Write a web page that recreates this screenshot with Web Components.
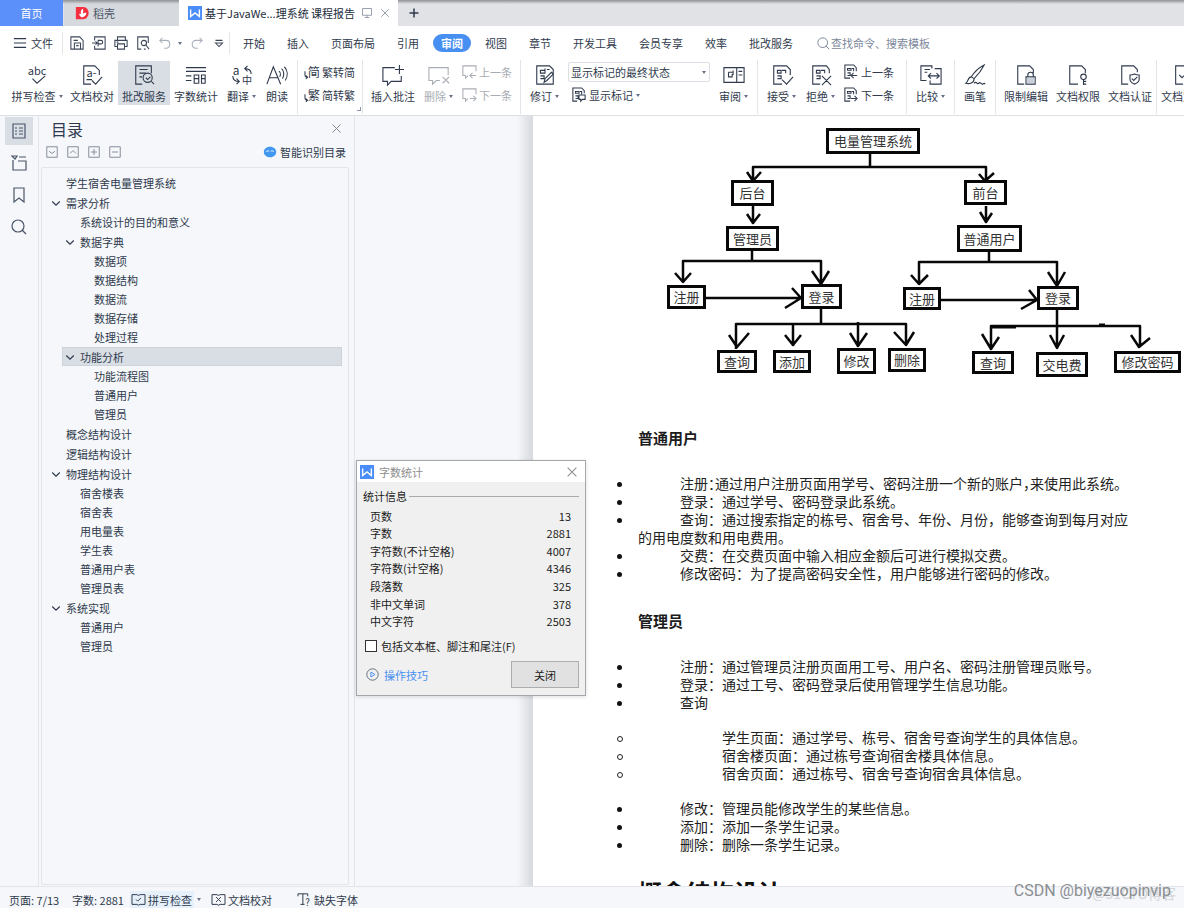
<!DOCTYPE html>
<html lang="zh-CN">
<head>
<meta charset="utf-8">
<title>基于JavaWeb的学生宿舍电量管理系统 课程报告</title>
<style>
html,body{margin:0;height:100%}
body{font-family:"Noto Sans CJK SC","Noto Sans",sans-serif;font-size:11px;line-height:16px;color:#2f3a4d;--line:#e2e5ea;--pane:#f5f7fa;--pick:#d9dee5;--accent:#478ff0;overflow:hidden}
</style>
</head>
<body>
<writer-app></writer-app>
<script>
const ICONS = {
  spell:['<text x="12" y="12" text-anchor="middle" font-size="12" fill="currentColor" stroke="none">abc</text><path d="M7 16l5 5 9-8"/>'],
  proof:['<path d="M11 22H3V2h12l5 5v5M12 18l4 4 7-8M6 17h6"/><text x="6" y="14" font-size="12" fill="currentColor" stroke="none">a-</text>'],
  batch:['<path d="M10 22H3V2h17v8M7 6h9M7 10h7M7 14h3"/><circle cx="16" cy="15" r="5"/><path d="M20 19l3 3M14 15l2 2 3-3"/>'],
  count:['<path d="M1 4h22M1 8h22M1 13h6M1 18h6M10 12h5v9h-5zM10 16h5M18 12h4v9h-4zM18 16h4"/>'],
  translate:['<text x="2" y="12" font-size="13" fill="currentColor" stroke="none">a</text><text x="12" y="22" font-size="11" fill="currentColor" stroke="none">中</text><path d="M22 11c0-4-2-6-7-6M18 2l-3 3 3 3M2 13c0 4 2 6 7 6M6 16l3 3-3 3"/>'],
  read:['<path d="M1 22L8 3l8 19M4 15h9M14 8c2 1 2 4 1 6M17 5c3 2 3 8 1 11M20 3c4 4 4 10 1 15"/>'],
  addnote:['<path d="M14 4H1v15h5v4l4-4h11v-6M19 1v10M14 6h10"/>'],
  delnote:['<path d="M22 12V4H1v14h4v4l4-4h4M16 14l7 7M23 14l-7 7"/>'],
  revise:['<path d="M12 22H3V2h14l4 4v16h-4M7 7h5v3H7zM12 7V5M14 6h3M7 13h4v3H7M11 20l1-4 7-7 2 2-7 7zM12 22h6"/>'],
  review:['<path d="M1 4h22v16H1zM15 4v16M17 8h4M17 12h4M6 9h5M6 9v5h4v-3M11 7v5"/>'],
  accept:['<path d="M12 22H3V2h14l4 4v6M7 7h4v3H7zM12 7h4v3M7 13h4v3H7M12 17l5 5 7-8"/>'],
  reject:['<path d="M11 22H3V2h15l3 4v4M7 7h4v3H7zM12 7h4v3M7 13h4v3H7M13 13l10 10M23 13L13 23"/>'],
  compare:['<path d="M7 18H1V2h12v3M16 5h7v17H11v-4M5 6h6M5 9h3M9 13h12M12 10l-3 3 3 3M18 10l3 3-3 3"/>'],
  brush:['<path d="M22 1C16 4 11 9 8 14l3 2c4-4 8-9 11-15zM8 14c-4 0-3 5-6 7 4 1 9 0 9-5M11 21c3-3 3 2 5 0s3 1 4 1 2-2 3 0"/>'],
  lock:['<path d="M10 22H3V2h13l4 4v4M12 14h10v8H12zM14 14v-2c0-4 6-4 6 0v2"/><path d="M13 15h8v6h-8z" fill="#c9d0da" stroke="none"/>'],
  key:['<path d="M12 22H3V2h13l4 4v4M18 17v6M18 19h3M18 22h3"/><circle cx="18" cy="14" r="3"/>'],
  cert:['<path d="M10 22H3V2h13l4 4v3M17 11c2 1 3 1 5 1v5c0 3-3 4-5 5-2-1-5-2-5-5v-5c2 0 3 0 5-1zM14 16l2 2 4-4"/>'],
  draft:['<path d="M12 22H4V2h13l4 4v16M8 12l3 3 6-6"/>'],
  jian:['<text x="3" y="14" font-size="14" fill="currentColor" stroke="none">简</text><path d="M0 7v4c0 2 0 3 3 3M1 12l2 2-2 2"/>'],
  fan:['<text x="3" y="14" font-size="14" fill="currentColor" stroke="none">繁</text><path d="M0 7v4c0 2 0 3 3 3M1 12l2 2-2 2"/>'],
  prevnote:['<path d="M16 7V1H1v11h3v3l3-3M16 12H9M12 9l-3 3 3 3"/>'],
  nextnote:['<path d="M16 7V1H1v11h3v3l3-3M9 12h7M13 9l3 3-3 3"/>'],
  marks:['<path d="M6 15H1V0h10l3 3v3M4 4h4v2H4zM9 4h2v3M4 9h3v3H4M8 8h7v5h-3l-2 2v-2H8z"/>'],
  prevmark:['<path d="M7 15H1V0h10l3 3v4M4 4h4v2H4zM9 4h2v3M4 9h3v3H4M15 12H9M11 9l-3 3 3 3"/>'],
  nextmark:['<path d="M7 15H1V0h10l3 3v4M4 4h4v2H4zM9 4h2v3M4 9h3v3H4M8 12h6M12 9l3 3-3 3"/>'],
  menu:['<path d="M1 3h14M1 8h14M1 13h14"/>'],
  save:['<path d="M1 1h10l4 4v10H1zM5 15V8h7v7M4 5h5M7 11h3"/>'],
  output:['<path d="M3 5V1h12v14H3v-4M0 8h6M4 6l2 2-2 2M7 12V5h3c3 0 3 4 0 4H7"/>'],
  print:['<path d="M4 5V1h9v4M4 12H1V5h14v7h-3M4 9h8v6H4zM3 7h2"/>'],
  preview:['<path d="M6 15H2V1h12v7"/><circle cx="9" cy="8" r="3"/><path d="M11 10l4 5M9 15h2"/>'],
  undo:['<path d="M5 2L2 5l3 3M2 5h7c6 0 6 9 0 9H7"/>'],
  redo:['<path d="M11 2l3 3-3 3M14 5H7c-6 0-6 9 0 9h2"/>'],
  more:['<path d="M4 5h8M4 8l4 4 4-4z"/>'],
  search:['<circle cx="7" cy="7" r="6"/><path d="M11 11l4 4"/>'],
  close:['<path d="M3 3l10 10M13 3L3 13"/>'],
  plus:['<path d="M8 2v12M2 8h12" stroke-width="2"/>'],
  screen:['<path d="M2 2h12v9H2zM5 14h6M8 11v3"/>'],
  wps:['<path d="M0 0h16v16H0z" fill="#4b8df8" stroke="none"/><path d="M3 4v8l5-4 5 4V4" stroke="#fff" stroke-width="1.6"/>'],
  docer:['<path d="M1 1h9c8 1 7 14-1 14H1z" fill="#f5303f" stroke="none"/><path d="M8 13C4 11 4 8 7 9c-1-3 0-5 2-6 1 2 0 4 0 6 2-2 3-1 4-1 0 3-2 4-5 5z" fill="#fff" stroke="none"/>'],
  toc:['<path d="M2 1h12v14H2zM4 5h2M4 8h2M4 11h2M8 5h4M8 8h4M8 11h4"/>'],
  folder:['<path d="M2 5v10h13V6H7M1 1h5L4 4zM8 2h7"/>'],
  bookmark:['<path d="M3 1h10v14l-5-4-5 4z"/>'],
  down:['<path d="M3 6l5 5 5-5" stroke-width="1.6"/>'],
  boxdown:['<path d="M1 1h14v14H1z"/><path d="M4 7l4 3 4-3"/>'],
  boxup:['<path d="M1 1h14v14H1z"/><path d="M4 10l4-4 4 4"/>'],
  boxplus:['<path d="M1 1h14v14H1z"/><path d="M4 8h8M8 4v8"/>'],
  boxminus:['<path d="M1 1h14v14H1z"/><path d="M4 8h8"/>'],
  smart:['<path d="M8 1c11 0 11 14 0 14S-3 1 8 1z" fill="#4298f0" stroke="none"/><path d="M3 8c1-2 3-2 4-1M9 7c2-1 3-1 4 1" stroke="#fff"/>'],
  play:['<circle cx="8" cy="8" r="7" stroke="#66707f"/><path d="M6 5l5 3-5 3z"/>'],
  bookcheck:['<path d="M0 2h6l2 1 2-1h6v12h-6l-2 1-2-1H0zM5 8l2 2 4-4"/>'],
  bookx:['<path d="M0 2h6l2 1 2-1h6v12h-6l-2 1-2-1H0zM5 5l6 6M11 5l-6 6"/>'],
  missing:['<path d="M0 4V1h12v3M6 1v13M3 14h5"/><text x="9" y="16" font-size="12" fill="currentColor" stroke="none">?</text>'],
};
const BIG = new Set(['spell','proof','batch','count','translate','read','addnote','delnote','revise','review','accept','reject','compare','brush','lock','key','cert','draft']);

const RESET = `*{box-sizing:border-box}
button{font:inherit;color:inherit;background:none;border:0;padding:0;margin:0;cursor:default;white-space:nowrap}
h1,h2,h3,p,ul{margin:0;padding:0}a{color:inherit;text-decoration:none}`;

function component(name, css, html, setup) {
  customElements.define(name, class extends HTMLElement {
    connectedCallback() {
      if (this.shadowRoot) return;
      const root = this.attachShadow({mode: 'open'});
      const t = document.createElement('template');
      t.innerHTML = `<style>${RESET}${css}</style>${typeof html === 'function' ? html(this) : html}`;
      root.append(t.content.cloneNode(true));
      if (setup) setup(root, this);
    }
  });
}

component('ui-icon', `:host{display:inline-flex;flex:none;width:var(--icon,16px);height:var(--icon,16px)}
svg{width:100%;height:100%;fill:none;stroke:currentColor;stroke-width:1.2;overflow:visible}`,
  el => { const n = el.getAttribute('name'), s = BIG.has(n) ? 24 : 16;
    return `<svg viewBox="0 0 ${s} ${s}" aria-hidden="true">${ICONS[n][0]}</svg>`; });

component('ui-caret', `:host{display:inline-block;flex:none;width:0;height:0;border:2px solid transparent;border-top:3px solid #66728a;border-bottom:0}`, '');

/* Large ribbon command: icon over label */
component('tool-button', `:host{display:flex;flex:none;width:52px;height:44px}
:host([size=m]){width:39px}:host([size=s]){width:32px}:host([size=l]){width:58px}
:host([active]){background:var(--pick)}:host([off]){color:#a9adb4}
button{width:100%;display:flex;flex-direction:column;align-items:center;justify-content:space-between;padding:3px 0 1px}
ui-icon{--icon:22px}span{display:flex;align-items:center;gap:3px}`,
  el => `<button type="button"><ui-icon name="${el.getAttribute('icon')}"></ui-icon><span><slot></slot>${el.hasAttribute('menu') ? '<ui-caret></ui-caret>' : ''}</span></button>`);

/* Small ribbon command: icon beside label */
component('tool-line', `:host{display:flex;flex:none}:host([off]){color:#a9adb4}
button{display:flex;align-items:center;gap:3px;height:16px}ui-icon{--icon:14px}`,
  el => `<button type="button"><ui-icon name="${el.getAttribute('icon')}"></ui-icon><slot></slot>${el.hasAttribute('menu') ? '<ui-caret></ui-caret>' : ''}</button>`);

component('tool-stack', `:host{display:flex;flex:none;flex-direction:column;gap:7px;padding-top:3px}`, '<slot></slot>');

component('ribbon-group', `:host{display:flex;flex:none;height:54px;padding:1px 4px 0;border-right:1px solid var(--line)}
:host([wide]){padding-left:7px;padding-right:7px}:host([lead]){padding-left:8px}
:host([flush]){padding-right:0}:host(:last-child){border:0;padding-left:0}`, '<slot></slot>');

component('tab-bar', `:host{display:flex;height:26px;background:linear-gradient(#8f9194,#e0e2e6 4px);flex:none}
button{display:flex;align-items:center;height:26px}
.home{width:63px;justify-content:center;background:#5b8ff9;color:#fff}
.tab{width:115px;padding-left:11px;gap:4px;background:linear-gradient(#8f9194,#d6d9de 4px);margin-left:1px;color:#4b5566}
.now{width:219px;padding:0 9px;gap:3px;background:#fff;color:#222c3c}
ui-icon{--icon:14px}.now span{flex:1;text-align:left}.dim{--icon:12px;color:#8d96a8;margin-left:3px}
.add{width:31px;justify-content:center}.add ui-icon{--icon:12px}`,
`<button type="button" class="home">首页</button>
<button type="button" class="tab"><ui-icon name="docer"></ui-icon>稻壳</button>
<button type="button" class="now"><ui-icon name="wps"></ui-icon><span>基于JavaWe...理系统 课程报告</span><ui-icon class="dim" name="screen"></ui-icon><ui-icon class="dim" name="close"></ui-icon></button>
<button type="button" class="add" aria-label="新建标签"><ui-icon name="plus"></ui-icon></button>`);

component('menu-strip', `:host{display:flex;align-items:center;height:34px;background:#fff;flex:none;padding-left:13px}
.file{display:flex;align-items:center;gap:4px;padding-right:9px;height:22px;border-right:1px solid var(--line)}
.quick{display:flex;align-items:center;gap:8px;padding:0 3px 0 7px;height:22px;border-right:1px solid var(--line);color:#3c4659}
.quick button{display:flex}.quick ui-icon{--icon:14px}.file ui-icon{--icon:14px}.fade{color:#a9b0bb}
.pair{display:flex;align-items:center;gap:6px}
nav{display:flex;gap:22px;padding-left:13px}nav button{line-height:18px}
nav .on{background:var(--accent);color:#fff;font-weight:700;border-radius:9px;padding:0 8px;margin:0 -8px}
label{display:flex;align-items:center;gap:1px;margin-left:24px;color:#7c879b}label ui-icon{--icon:13px}
input{font:inherit;border:0;outline:0;padding:0;width:120px;background:none}input::placeholder{color:#7c879b;opacity:1}`,
`<button type="button" class="file"><ui-icon name="menu"></ui-icon>文件</button>
<div class="quick">${['save','output','print','preview'].map(n=>`<button type="button" aria-label="${n}"><ui-icon name="${n}"></ui-icon></button>`).join('')}
<span class="pair fade"><button type="button" aria-label="撤销"><ui-icon name="undo"></ui-icon></button><ui-caret></ui-caret></span>
<button type="button" class="fade" aria-label="恢复"><ui-icon name="redo"></ui-icon></button><button type="button" aria-label="更多"><ui-icon name="more"></ui-icon></button></div>
<nav>${['开始','插入','页面布局','引用','审阅','视图','章节','开发工具','会员专享','效率','批改服务'].map(t=>`<button type="button"${t==='审阅'?' class="on"':''}>${t}</button>`).join('')}</nav>
<label><ui-icon name="search"></ui-icon><input aria-label="搜索" placeholder="查找命令、搜索模板"></label>`);

component('ribbon-bar', `:host{display:flex;height:56px;background:#fff;border-bottom:1px solid #dcdfe4;overflow:hidden;flex:none}
.corner{align-self:flex-end;width:4px;height:4px;border:solid #8d96a8;border-width:0 1px 1px 0;margin:0 -6px 3px 2px}
.combo{position:relative;display:flex;align-items:center}.combo select{appearance:none;width:142px;height:20px;border:1px solid #dcdfe5;border-radius:2px;background:#fff;font:inherit;color:inherit;padding:0 2px;line-height:16px}
.combo ui-caret{position:absolute;right:4px}.state{gap:5px;padding-top:1px;margin:0 4px}.state tool-line{margin-left:4px}.notes{margin:0 4px}.notes.far{margin-right:8px}`,
`<ribbon-group lead><tool-button size="l" icon="spell" menu>拼写检查</tool-button><tool-button icon="proof">文档校对</tool-button><tool-button icon="batch" active>批改服务</tool-button><tool-button icon="count">字数统计</tool-button><tool-button size="m" icon="translate" menu>翻译</tool-button><tool-button size="s" icon="read">朗读</tool-button></ribbon-group>
<ribbon-group wide><tool-stack><tool-line icon="jian">繁转简</tool-line><tool-line icon="fan">简转繁</tool-line></tool-stack><span class="corner"></span></ribbon-group>
<ribbon-group><tool-button icon="addnote">插入批注</tool-button><tool-button size="m" icon="delnote" menu off>删除</tool-button><tool-stack class="notes"><tool-line icon="prevnote" off>上一条</tool-line><tool-line icon="nextnote" off>下一条</tool-line></tool-stack></ribbon-group>
<ribbon-group><tool-button size="m" icon="revise" menu>修订</tool-button><tool-stack class="state"><span class="combo"><select aria-label="显示状态"><option>显示标记的最终状态</option></select><ui-caret></ui-caret></span><tool-line icon="marks" menu>显示标记</tool-line></tool-stack><tool-button size="m" icon="review" menu>审阅</tool-button></ribbon-group>
<ribbon-group><tool-button size="m" icon="accept" menu>接受</tool-button><tool-button size="m" icon="reject" menu>拒绝</tool-button><tool-stack class="notes far"><tool-line icon="prevmark">上一条</tool-line><tool-line icon="nextmark">下一条</tool-line></tool-stack></ribbon-group>
<ribbon-group><tool-button size="m" icon="compare" menu>比较</tool-button></ribbon-group>
<ribbon-group><tool-button size="s" icon="brush">画笔</tool-button></ribbon-group>
<ribbon-group flush><tool-button icon="lock">限制编辑</tool-button><tool-button icon="key">文档权限</tool-button><tool-button icon="cert">文档认证</tool-button></ribbon-group>
<ribbon-group flush><tool-button icon="draft">文档定稿</tool-button></ribbon-group>`);

component('side-rail', `:host{display:flex;flex-direction:column;gap:4px;align-items:center;width:39px;padding-top:1px;background:var(--pane);border-right:1px solid var(--line)}
button{width:28px;height:28px;display:flex;align-items:center;justify-content:center;color:#4a5568}button.on{background:var(--pick)}`,
`<button type="button" class="on" aria-label="目录"><ui-icon name="toc"></ui-icon></button><button type="button" aria-label="章节"><ui-icon name="folder"></ui-icon></button><button type="button" aria-label="书签"><ui-icon name="bookmark"></ui-icon></button><button type="button" aria-label="查找"><ui-icon name="search"></ui-icon></button>`);

const TREE = [['学生宿舍电量管理系统'],
 ['需求分析',[['系统设计的目的和意义'],['数据字典',[['数据项'],['数据结构'],['数据流'],['数据存储'],['处理过程']]],['功能分析',[['功能流程图'],['普通用户'],['管理员']]]]],
 ['概念结构设计'],['逻辑结构设计'],
 ['物理结构设计',[['宿舍楼表'],['宿舍表'],['用电量表'],['学生表'],['普通用户表'],['管理员表']]],
 ['系统实现',[['普通用户'],['管理员']]]];
const branch = items => `<ul>${items.map(([t,kids]) => `<li class="${kids?'open':''}"><button type="button" class="${t==='功能分析'?'on':''}">${kids?'<ui-icon name="down"></ui-icon>':'<i></i>'}${t}</button>${kids?branch(kids):''}</li>`).join('')}</ul>`;

component('outline-tree', `:host{display:block;flex:1;min-height:0;overflow:hidden;border:1px solid var(--line);border-radius:2px;padding:4px 6px 0 6px}
ul{list-style:none}ul ul{padding-left:14px}:host>ul>li,.open{margin-top:1px}
button{display:flex;align-items:center;width:100%;height:19px;gap:4px;padding-left:2px}
button.on{background:var(--pick);outline:1px solid #cdd3db;outline-offset:-1px}
ui-icon{--icon:12px}i{width:12px}`, branch(TREE));

component('outline-panel', `:host{display:flex;flex-direction:column;width:316px;flex:none;background:var(--pane);border-right:1px solid var(--line);padding:0 5px 1px 2px}
header{display:flex;align-items:center;justify-content:space-between;height:25px;padding:0 6px 0 10px}
h2{font-size:16px;font-weight:400;line-height:24px}header button,.bar button{display:flex}header ui-icon{--icon:13px;color:#7d8798}
.bar{display:flex;align-items:center;height:22px;gap:9px;padding:0 3px 0 5px;color:#7a8392;margin-bottom:4px}.bar ui-icon{--icon:12px}
.bar .smart{margin-left:auto;color:#2f3a4d;align-items:center;gap:4px}`,
`<header><h2>目录</h2><button type="button" aria-label="关闭目录"><ui-icon name="close"></ui-icon></button></header>
<div class="bar">${['boxdown','boxup','boxplus','boxminus'].map(n=>`<button type="button" aria-label="${n}"><ui-icon name="${n}"></ui-icon></button>`).join('')}<button type="button" class="smart"><ui-icon name="smart"></ui-icon>智能识别目录</button></div>
<outline-tree></outline-tree>`);

/* Function chart. Coordinates are in the chart's own canvas. */
const NODES = [['电量管理系统',188,12,94,26],['后台',93,64,43,26],['前台',326,64,43,25],['管理员',88,110,53,25],['普通用户',319,109,65,27],
 ['注册',29,169,39,24],['登录',163,168,41,25],['注册',265,171,38,23],['登录',399,170,42,24],
 ['查询',79,234,40,23],['添加',135,234,38,23],['修改',199,232,39,26],['删除',250,232,38,24],
 ['查询',334,235,42,23],['交电费',398,236,52,25],['修改密码',476,235,67,22]];
component('flow-chart', `:host{display:block;position:relative;height:265px}
svg{position:absolute;left:0;top:0;width:546px;height:265px;fill:none;stroke:#080808;stroke-width:2.5;stroke-linejoin:round;overflow:visible}
span{position:absolute;display:flex;align-items:center;justify-content:center;border:3px solid #080808;font-size:13px;line-height:16px;white-space:nowrap;background:#fff;color:#333}`,
`<svg viewBox="-2 0 546 265" aria-hidden="true"><path d="M230 38v13M113 66V51h233v14M107 56l6 9 8-9M339 58l6 7 9-8
M113 90v18M107 98l6 9 7-9M346 90v16M340 96l6 10 6-9M112 135v10M43 166v-21h138v23M35 157l8 9 8-9M172 155l9 13 8-13
M349 136v10M279 167v-21h138v26M271 159l8 9 9-9M408 156l9 14 8-14
M66 182h94M152 172l9 10-16 10M301 184h96M389 174l8 10-16 9
M181 193v16M96 233v-25h170v21M89 219l8 12 12-14M153 209v21M145 219l8 10 8-10M218 206v25M210 217l8 13 9-13M254 216l12 13 8-13
M417 194v38M351 234v-24h149v20M342 218l9 15 8-12M410 219l7 13 7-13M491 219l8 12 11-9"/><path d="M351 211h25M459 209h6" stroke-width="3"/></svg>
${NODES.map(([t,x,y,w,h])=>`<span style="left:${x}px;top:${y}px;width:${w}px;height:${h}px">${t}</span>`).join('')}`);

component('doc-page', `:host{display:block;flex:1;min-width:0;background:#fff;padding:0 54px 0 105px;color:#222;font-size:14px;line-height:18px;overflow:hidden}
flow-chart{margin-right:-54px}
h3{font-size:15px;line-height:20px;color:#1c1c1c}h3.a{margin:47px 0 26px}h3.b{margin:29px 0 26px}
h2{font-size:24px;line-height:32px;white-space:nowrap;margin-top:23px;color:#111}
ul{list-style:none;margin-left:-21px}li{display:grid;grid-template-columns:21px 1fr}
li::before{content:"";box-sizing:border-box;width:5px;height:5px;border-radius:50%;background:#111;margin:8px 0 0}
p{text-indent:42px}.in{margin-top:17px;margin-bottom:17px}.in p{text-indent:84px}.in li::before{background:none;border:1px solid #222;width:6px;height:6px}
.half{font-feature-settings:"halt"}`,
`<flow-chart></flow-chart>
<h3 class="a">普通用户</h3>
<ul><li><p>注册<span class="half">：</span>通过用户注册页面用学号、密码注册一个新的账户<span class="half">，</span>来使用此系统。</p></li><li><p>登录：通过学号、密码登录此系统。</p></li><li><p>查询：通过搜索指定的栋号、宿舍号、年份、月份，能够查询到每月对应的用电度数和用电费用。</p></li><li><p>交费：在交费页面中输入相应金额后可进行模拟交费。</p></li><li><p>修改密码：为了提高密码安全性，用户能够进行密码的修改。</p></li></ul>
<h3 class="b">管理员</h3>
<ul><li><p>注册：通过管理员注册页面用工号、用户名、密码注册管理员账号。</p></li><li><p>登录：通过工号、密码登录后使用管理学生信息功能。</p></li><li><p>查询</p></li></ul>
<ul class="in"><li><p>学生页面：通过学号、栋号、宿舍号查询学生的具体信息。</p></li><li><p>宿舍楼页面：通过栋号查询宿舍楼具体信息。</p></li><li><p>宿舍页面：通过栋号、宿舍号查询宿舍具体信息。</p></li></ul>
<ul><li><p>修改：管理员能修改学生的某些信息。</p></li><li><p>添加：添加一条学生记录。</p></li><li><p>删除：删除一条学生记录。</p></li></ul>
<h2>概念结构设计</h2>`);

component('count-dialog', `:host{display:block;width:230px;border:1px solid #a3a6aa;background:#f0f0f0;color:#1b1b1b;box-shadow:0 1px 4px #0002}
header{display:flex;align-items:center;gap:5px;height:21px;background:#fff;padding:0 6px 0 3px;color:#8d8d8d}header h2{flex:1;font-size:11px;font-weight:400;line-height:16px}header ui-icon{--icon:14px}header button{display:flex}
.legend{display:flex;align-items:center;gap:2px;padding:6px 6px 0}.legend::after{content:"";flex:1;border-top:1px solid #aaa}
table{width:201px;height:123px;margin:3px 0 0 13px;border-collapse:collapse}th,td{padding:0;font-weight:400;text-align:left;line-height:16px}td{text-align:right}
label{display:flex;align-items:center;gap:4px;margin:8px 0 0 8px}input{appearance:none;width:12px;height:12px;margin:0;border:1px solid #333;background:#fff}
footer{display:flex;align-items:center;justify-content:space-between;padding:7px 6px 7px 9px}footer a{display:flex;align-items:center;gap:5px;color:var(--accent)}footer a ui-icon{--icon:13px}
footer button{width:68px;height:27px;border:1px solid #adadad;background:#e1e1e1}`,
`<header><ui-icon name="wps"></ui-icon><h2>字数统计</h2><button type="button" aria-label="关闭窗口"><ui-icon name="close"></ui-icon></button></header>
<div class="legend">统计信息</div>
<table>${[['页数',13],['字数',2881],['字符数(不计空格)',4007],['字符数(计空格)',4346],['段落数',325],['非中文单词',378],['中文字符',2503]].map(([a,b])=>`<tr><th scope="row">${a}</th><td>${b}</td></tr>`).join('')}</table>
<label><input type="checkbox">包括文本框、脚注和尾注(F)</label>
<footer><a href="#tips"><ui-icon name="play"></ui-icon>操作技巧</a><button type="button">关闭</button></footer>`);

component('status-bar', `:host{display:flex;align-items:center;height:22px;flex:none;background:var(--pane);border-top:1px solid var(--line);padding:4px 0 0 9px;position:relative;box-sizing:border-box}
button{display:flex;align-items:center;gap:3px;height:17px}ui-icon{--icon:13px}.pages{width:63px}.words{width:58px}
.spell{background:#e6f0fb;padding:0 2px;gap:3px;margin-right:3px}.proof{margin:0 26px 0 11px}
.mark{position:absolute;right:13px;top:-6px;font:16px/20px Roboto,sans-serif;color:#8b8e92;white-space:nowrap}
.mark.back{right:8px;top:-4px;font:14px/20px "Noto Sans CJK SC",sans-serif;color:#d3d5d8}`,
`<button type="button" class="pages">页面: 7/13</button><button type="button" class="words">字数: 2881</button>
<button type="button" class="spell"><ui-icon name="bookcheck"></ui-icon>拼写检查</button><ui-caret></ui-caret>
<button type="button" class="proof"><ui-icon name="bookx"></ui-icon>文档校对</button><button type="button"><ui-icon name="missing"></ui-icon>缺失字体</button>
<span class="mark back">@51CTO博客</span><span class="mark">CSDN @biyezuopinvip</span>`);

component('writer-app', `:host{display:flex;flex-direction:column;height:100vh;overflow:hidden}
main{flex:1;min-height:0;display:flex;position:relative}
.desk{flex:1;min-width:0;display:flex;padding-left:178px;background:linear-gradient(90deg,#f5f7fa 162px,#d6d9dd 178px)}
count-dialog{position:absolute;left:356px;top:344px}`,
`<tab-bar></tab-bar><menu-strip></menu-strip><ribbon-bar></ribbon-bar>
<main><side-rail></side-rail><outline-panel></outline-panel><div class="desk"><doc-page></doc-page></div><count-dialog role="dialog" aria-label="字数统计"></count-dialog></main>
<status-bar></status-bar>`);
</script>
</body>
</html>
